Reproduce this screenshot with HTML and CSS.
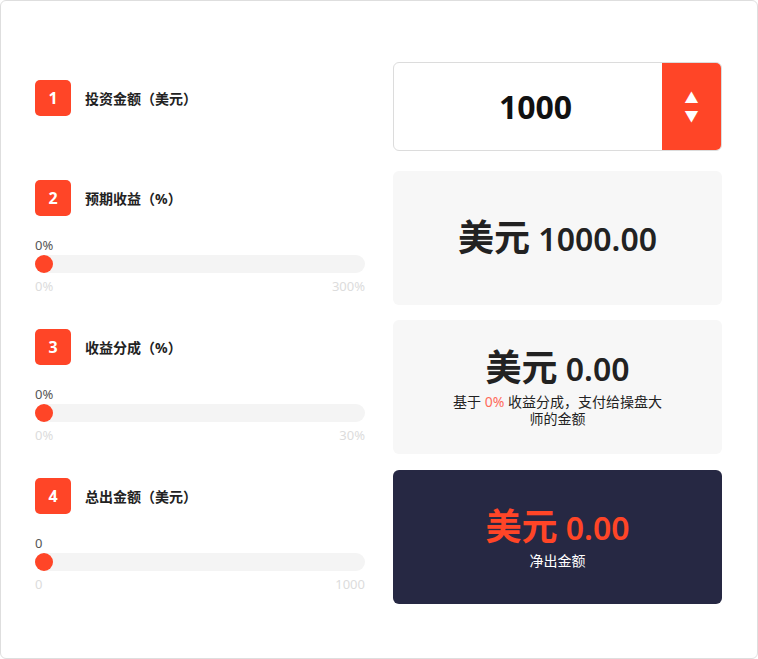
FILE: index.html
```html
<!DOCTYPE html>
<html lang="zh-CN">
<head>
    <meta charset="UTF-8">
    <meta name="viewport" content="width=device-width, initial-scale=1.0">
    <title>收益计算器</title>
    <link rel="stylesheet" href="styles.css">
</head>
<body>
    <div class="calc">
        <div class="grid">
            <!-- row 1 -->
            <div class="step step-first">
                <div class="step-head">
                    <span class="badge">1</span>
                    <span class="step-title">投资金额（美元）</span>
                </div>
            </div>
            <div class="amount-box">
                <div class="amount-value">1000</div>
                <div class="spinner">
                    <span>&#9650;</span>
                    <span>&#9660;</span>
                </div>
            </div>

            <!-- row 2 -->
            <div class="step">
                <div class="step-head">
                    <span class="badge">2</span>
                    <span class="step-title">预期收益（%）</span>
                </div>
                <div class="slider">
                    <div class="slider-value">0%</div>
                    <div class="track"><span class="thumb"></span></div>
                    <div class="slider-range"><span>0%</span><span>300%</span></div>
                </div>
            </div>
            <div class="result">
                <div class="result-amount"><b>美元</b> 1000.00</div>
            </div>

            <!-- row 3 -->
            <div class="step">
                <div class="step-head">
                    <span class="badge">3</span>
                    <span class="step-title">收益分成（%）</span>
                </div>
                <div class="slider">
                    <div class="slider-value">0%</div>
                    <div class="track"><span class="thumb"></span></div>
                    <div class="slider-range"><span>0%</span><span>30%</span></div>
                </div>
            </div>
            <div class="result">
                <div class="result-amount"><b>美元</b> 0.00</div>
                <div class="result-note">基于 <span class="hl">0%</span> 收益分成，支付给操盘大师的金额</div>
            </div>

            <!-- row 4 -->
            <div class="step">
                <div class="step-head">
                    <span class="badge">4</span>
                    <span class="step-title">总出金额（美元）</span>
                </div>
                <div class="slider">
                    <div class="slider-value">0</div>
                    <div class="track"><span class="thumb"></span></div>
                    <div class="slider-range"><span>0</span><span>1000</span></div>
                </div>
            </div>
            <div class="result result-dark">
                <div class="result-amount"><b>美元</b> 0.00</div>
                <div class="result-note">净出金额</div>
            </div>
        </div>
    </div>
</body>
</html>
```

FILE: styles.css
```css
body {
    margin: 0;
    padding: 0;
    background-color: #fff;
    font-family: "Noto Sans", "Noto Sans CJK SC", sans-serif;
    color: #222;
}
.calc {
    box-sizing: border-box;
    width: 758px;
    height: 659px;
    border: 1px solid #dedede;
    border-radius: 6px;
    padding: 61px 34px 0 34px;
}
.grid {
    display: grid;
    grid-template-columns: 330px 329px;
    column-gap: 28px;
    row-gap: 15px;
}
.step {
    padding-top: 9px;
}
.step-first {
    padding-top: 18px;
}
.step-head {
    display: flex;
    align-items: center;
    gap: 14px;
}
.badge {
    width: 36px;
    height: 36px;
    border-radius: 5px;
    background-color: #ff4527;
    color: #fff;
    font-weight: 700;
    font-size: 16px;
    display: flex;
    align-items: center;
    justify-content: center;
}
.step-title {
    font-size: 14px;
    font-weight: 700;
    color: #222;
}
.slider {
    margin-top: 21px;
}
.slider-value {
    font-size: 13px;
    line-height: 17px;
    color: #555;
    margin-bottom: 1px;
}
.track {
    position: relative;
    height: 18px;
    border-radius: 9px;
    background-color: #f4f4f4;
}
.thumb {
    position: absolute;
    left: 0;
    top: 0;
    width: 18px;
    height: 18px;
    border-radius: 50%;
    background-color: #ff4527;
}
.slider-range {
    display: flex;
    justify-content: space-between;
    margin-top: 5px;
    font-size: 13px;
    line-height: 17px;
    color: #dcdcdc;
}
.amount-box {
    display: flex;
    height: 89px;
    box-sizing: border-box;
    border: 1px solid #dcdcdc;
    border-radius: 6px;
    overflow: hidden;
    margin-bottom: 5px;
}
.amount-value {
    flex: 1;
    display: flex;
    align-items: center;
    justify-content: center;
    padding-left: 15px;
    font-size: 32px;
    font-weight: 700;
    color: #111;
}
.spinner {
    width: 59px;
    background-color: #ff4527;
    color: #fff;
    display: flex;
    flex-direction: column;
    align-items: center;
    justify-content: center;
    font-size: 14px;
    line-height: 18px;
}
.result {
    height: 134px;
    border-radius: 6px;
    background-color: #f7f7f7;
    display: flex;
    flex-direction: column;
    align-items: center;
    justify-content: center;
    text-align: center;
}
.result-amount {
    font-size: 32px;
    font-weight: 600;
    line-height: 42px;
    color: #222;
}
.result-amount b {
    font-size: 36px;
    font-weight: 700;
    line-height: 42px;
}
.result-note {
    font-size: 14px;
    line-height: 17px;
    color: #222;
    width: 216px;
    margin-top: 3px;
}
.hl {
    color: #ff6b5b;
}
.result-dark {
    background-color: #262843;
    margin-top: 1px;
}
.result-dark .result-amount {
    color: #ff4527;
}
.result-dark .result-note {
    color: #fff;
}
```
